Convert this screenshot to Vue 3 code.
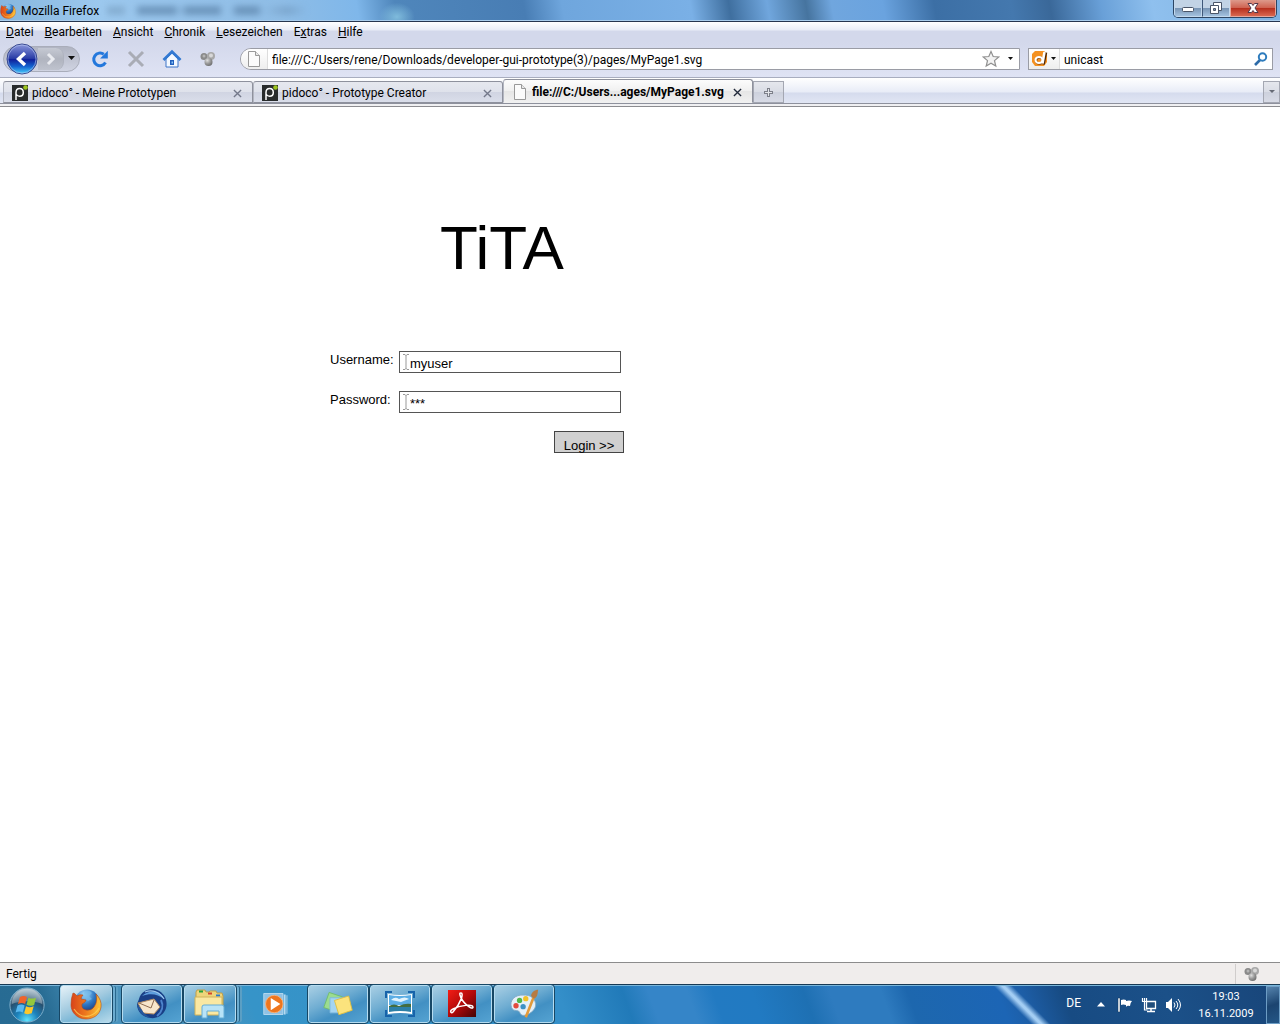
<script setup>
import { ref } from 'vue'

const menus = [
  { key: 'D', before: '', after: 'atei' },
  { key: 'B', before: '', after: 'earbeiten' },
  { key: 'A', before: '', after: 'nsicht' },
  { key: 'C', before: '', after: 'hronik' },
  { key: 'L', before: '', after: 'esezeichen' },
  { key: 'x', before: 'E', after: 'tras' },
  { key: 'H', before: '', after: 'ilfe' },
]

const tabs = [
  { title: 'pidoco° - Meine Prototypen', icon: 'pidoco', active: false },
  { title: 'pidoco° - Prototype Creator', icon: 'pidoco', active: false },
  { title: 'file:///C:/Users...ages/MyPage1.svg', icon: 'page', active: true },
]

const address = ref('file:///C:/Users/rene/Downloads/developer-gui-prototype(3)/pages/MyPage1.svg')
const search = ref('unicast')
const username = ref('myuser')
const password = ref('***')
</script>

<template>
  <div class="desktop">
    <header class="titlebar">
      <svg class="app-icon" viewBox="0 0 32 32" aria-hidden="true">
        <use href="#firefox" />
      </svg>
      <span class="window-title">Mozilla Firefox</span>
      <span class="ghost" aria-hidden="true"></span>
      <div class="window-buttons">
        <button type="button" class="minimize" aria-label="Minimieren">
          <svg viewBox="0 0 16 16"><rect x="2.500" y="7.500" width="11" height="4" rx="1" fill="#fff" stroke="#4a5568" /></svg>
        </button>
        <button type="button" class="restore" aria-label="Wiederherstellen">
          <svg viewBox="0 0 16 16">
            <path d="M5.500 2.500h8v8h-8z" fill="#fff" stroke="#4a5568" />
            <path d="M2.500 5.500h8v8h-8z" fill="#fff" stroke="#4a5568" />
            <path d="M5.500 8.500h2v2h-2z" fill="#7d97b5" stroke="#4a5568" />
          </svg>
        </button>
        <button type="button" class="close" aria-label="Schließen">
          <svg viewBox="0 0 16 16">
            <path d="M3 3.500h3.500L8 5.500l1.500-2H13L10 8l3 4.500H9.500L8 10.500l-1.500 2H3L6 8z" fill="#fff" stroke="#53394a" />
          </svg>
        </button>
      </div>
    </header>

    <nav class="menubar">
      <a v-for="m in menus" :key="m.key" href="#">{{ m.before }}<u>{{ m.key }}</u>{{ m.after }}</a>
    </nav>

    <div class="toolbar">
      <div class="history">
        <button type="button" class="back" aria-label="Zurück">
          <svg viewBox="0 0 32 32">
            <defs>
              <linearGradient id="backFill" x1="0" y1="0" x2="0" y2="1">
                <stop offset="0" stop-color="#8b97dc" />
                <stop offset=".48" stop-color="#2a3da6" />
                <stop offset=".52" stop-color="#10209a" />
                <stop offset=".75" stop-color="#1464d0" />
                <stop offset="1" stop-color="#4ad4ff" />
              </linearGradient>
            </defs>
            <circle cx="16" cy="16" r="15" fill="url(#backFill)" stroke="#39498f" />
            <circle cx="16" cy="16" r="14" fill="none" stroke="#b5c8f2" stroke-opacity=".6" />
            <path d="M19 10l-6.500 6 6.500 6" fill="none" stroke="#fff" stroke-width="3.400" />
          </svg>
        </button>
        <button type="button" class="forward" aria-label="Vor">
          <svg viewBox="0 0 24 22"><path d="M9 6l5 5-5 5" fill="none" stroke="#e9ebf0" stroke-width="3" /></svg>
        </button>
        <button type="button" class="history-menu" aria-label="Verlauf">
          <svg viewBox="0 0 8 5"><path d="M0 0h7L3.500 4z" fill="#111" /></svg>
        </button>
      </div>
      <div class="tools">
        <button type="button" aria-label="Neu laden">
          <svg viewBox="0 0 20 20">
            <path d="M15.500 13.500A6.300 6.300 0 1 1 13.800 5.300" fill="none" stroke="#2478dc" stroke-width="3" />
            <path d="M17.800 1.800v7.700h-7.700z" fill="#2478dc" />
          </svg>
        </button>
        <button type="button" aria-label="Stopp">
          <svg viewBox="0 0 20 20"><path d="M3 3l14 14M17 3L3 17" stroke="#a9acb5" stroke-width="3" /></svg>
        </button>
        <button type="button" aria-label="Startseite">
          <svg viewBox="0 0 20 20">
            <path d="M4 10v8h12v-8l-6-6z" fill="#f4f9ff" stroke="#3d75c8" />
            <path d="M1.500 11L10 2.800 18.500 11" fill="none" stroke="#3279d2" stroke-width="2.800" />
            <path d="M8 16v-5h4v5z" fill="#2461bd" />
            <path d="M9.500 12.500h1.500v2H9.500z" fill="#8cc7f7" />
          </svg>
        </button>
        <button type="button" aria-label="Erweiterung">
          <svg viewBox="0 0 20 20"><use href="#balls" /></svg>
        </button>
      </div>
      <div class="address">
        <span class="identity">
          <svg viewBox="0 0 14 16"><use href="#page" /></svg>
        </span>
        <input v-model="address" type="text" aria-label="Adresse" />
        <button type="button" class="star" aria-label="Lesezeichen hinzufügen">
          <svg viewBox="0 0 18 18"><path d="M9 1.500l2.200 5 5.500.5-4.200 3.600 1.300 5.400L9 13.200 4.200 16l1.300-5.400L1.300 7l5.500-.5z" fill="#f3f3f3" stroke="#909090" stroke-width="1.200" /></svg>
        </button>
        <button type="button" class="drop" aria-label="Adressliste">
          <svg viewBox="0 0 6 4"><path d="M0 0h5L2.500 3z" fill="#111" /></svg>
        </button>
      </div>
      <div class="search">
        <button type="button" class="engine" aria-label="Suchmaschine">
          <svg class="engine-logo" viewBox="0 0 17 17">
            <path d="M4 1h9l3 3v8l-3 4H4l-3-4V4z" fill="#f49121" />
            <g fill="none" stroke-width="2.500">
              <path d="M15 2.500L12.500 14.500" stroke="#4d2808" />
              <ellipse cx="8.500" cy="10.500" rx="3.500" ry="3" stroke="#8a4a10" />
              <path d="M13.500 2L11.500 13.500" stroke="#fff" />
              <ellipse cx="8" cy="10" rx="3.500" ry="3" stroke="#fff" stroke-width="2" />
            </g>
          </svg>
          <svg class="arrow" viewBox="0 0 6 4"><path d="M0 0h5L2.500 3z" fill="#111" /></svg>
        </button>
        <input v-model="search" type="text" aria-label="Suche" />
        <button type="button" class="go" aria-label="Suchen">
          <svg viewBox="0 0 14 14">
            <path d="M1 13l5-5" stroke="#2d6ba8" stroke-width="2.600" />
            <circle cx="8.500" cy="5" r="3.700" fill="#fff" stroke="#2d7bbd" stroke-width="2" />
          </svg>
        </button>
      </div>
    </div>

    <div class="tabstrip">
      <div v-for="t in tabs" :key="t.title" class="tab" :class="{ active: t.active }">
        <svg v-if="t.icon === 'pidoco'" class="favicon" viewBox="0 0 16 16">
          <path d="M0 0h16v16H0z" fill="#282b2c" />
          <path d="M4 15V7.500C4 5 5.500 3.500 7.600 3.500S11.300 5 11.300 7.500 9.700 11.300 7.600 11.300 4.500 10 4 9" fill="none" stroke="#fff" stroke-width="1.500" />
          <circle cx="13.500" cy="2.500" r="2.300" fill="#9cc41f" />
        </svg>
        <svg v-else class="favicon" viewBox="0 0 14 16"><use href="#page" /></svg>
        <span class="tab-title">{{ t.title }}</span>
        <button type="button" class="tab-close" aria-label="Tab schließen">
          <svg viewBox="0 0 10 10"><path d="M1 1l8 8M9 1L1 9" /></svg>
        </button>
      </div>
      <button type="button" class="new-tab" aria-label="Neuer Tab">
        <svg viewBox="0 0 9 9"><path d="M4.500 0v9M0 4.500h9" stroke="#7d808a" stroke-width="3" /><path d="M4.500 1v7M1 4.500h7" stroke="#e3e5ea" /></svg>
      </button>
      <button type="button" class="all-tabs" aria-label="Alle Tabs">
        <svg viewBox="0 0 6 4"><path d="M0 0h6L3 3z" fill="#666a75" /></svg>
      </button>
    </div>

    <main class="page">
      <form class="login" @submit.prevent>
        <h1>TiTA</h1>
        <div class="row">
          <label for="username">Username:</label>
          <div class="field">
            <svg viewBox="0 0 6 16"><path d="M0 .5h2l1 1 1-1h2M3 1v14M0 15.500h2l1-1 1 1h2" fill="none" stroke="#999" /></svg>
            <input id="username" v-model="username" type="text" />
          </div>
        </div>
        <div class="row">
          <label for="password">Password:</label>
          <div class="field">
            <svg viewBox="0 0 6 16"><path d="M0 .5h2l1 1 1-1h2M3 1v14M0 15.500h2l1-1 1 1h2" fill="none" stroke="#999" /></svg>
            <input id="password" v-model="password" type="text" />
          </div>
        </div>
        <button type="submit" class="submit">Login &gt;&gt;</button>
      </form>
    </main>

    <div class="statusbar">
      <span class="status-text">Fertig</span>
      <span class="status-addon"><svg viewBox="0 0 20 20"><use href="#balls" /></svg></span>
    </div>

    <footer class="taskbar">
      <button type="button" class="start" aria-label="Start">
        <svg viewBox="0 0 40 40">
          <defs>
            <radialGradient id="orb" cx=".5" cy=".95" r=".9">
              <stop offset="0" stop-color="#5de4ff" />
              <stop offset=".35" stop-color="#1c83bd" />
              <stop offset=".7" stop-color="#27506f" />
              <stop offset="1" stop-color="#9db4c2" />
            </radialGradient>
          </defs>
          <circle cx="20" cy="20" r="18" fill="url(#orb)" stroke="#7fb0cc" />
          <path d="M4 19a16 16 0 0 1 32 0c-9-4-22-4-32 0z" fill="#fff" fill-opacity=".3" />
          <path d="M12.500 11.500c3-1.500 5-1.300 7.500 0l-2 7.500c-2.500-1.300-4.700-1.300-7.500 0z" fill="#f0642b" />
          <path d="M21.500 12.300c2.500 1.300 5 1.300 8 0l-2 7.700c-3 1.300-5.500 1.200-8-.2z" fill="#94c83d" />
          <path d="M10 20.500c3-1.400 5-1.200 7.500 0l-2 7.300c-2.500-1.300-4.500-1.200-7.500 0z" fill="#58b8f0" />
          <path d="M19 21.300c2.500 1.300 5 1.300 8 .1l-2 7.400c-3 1.200-5.500 1.100-8-.2z" fill="#fbc72c" />
        </svg>
      </button>
      <button type="button" class="task current stacked" aria-label="Firefox">
        <svg viewBox="0 0 32 32"><use href="#firefox" /></svg>
      </button>
      <button type="button" class="task bird" aria-label="Thunderbird">
        <svg viewBox="0 0 32 32">
          <path d="M3 11C5 3 14-1 21 2c8 3 11 11 9 18-2 7-9 11-16 10C7 29 1 24 1 16z" fill="#193f86" />
          <path d="M6 8c7-7 19-6 22 3-6-5-14-6-22-3z" fill="#5d9ddd" />
          <path d="M9 4c7-3 15 0 19 7" fill="none" stroke="#9cc8ee" stroke-width="1.200" />
          <path d="M25 12c3 6 1 12-4 16" fill="none" stroke="#4d84cc" stroke-width="2" />
          <path d="M2 15l16-4 6 8-6 7-11-1z" fill="#f7e6cb" stroke="#b18b62" />
          <path d="M3 15l12 5 3-8" fill="none" stroke="#8d6b50" />
          <path d="M1 16c1 8 6 13 14 14-5-3-8-5-9-8z" fill="#24579c" />
        </svg>
      </button>
      <button type="button" class="task folder stacked" aria-label="Explorer">
        <svg viewBox="0 0 32 32">
          <path d="M2 4l1-2h8l1 2h3l1-1h6l1 2h5l1 3v18H2z" fill="#eed57b" stroke="#bf9f49" />
          <path d="M5 3.500h4" stroke="#26a33a" stroke-width="2" />
          <path d="M14 5.500h4" stroke="#d4452d" stroke-width="2" />
          <path d="M22 7.500h4" stroke="#277bd0" stroke-width="2" />
          <path d="M1 9h27v18H1z" fill="#fae8a2" stroke="#d0b25b" />
          <path d="M8 30V19q0-2 2-2h18q2 0 2 2v11h-5v-7H13v7z" fill="#b8e3f7" stroke="#64add6" />
        </svg>
      </button>
      <button type="button" class="task media flat" aria-label="Media Player">
        <svg viewBox="0 0 32 32">
          <path d="M28 6h1v21h-1zM25 5h2v23h-2z" fill="#b7daf0" />
          <path d="M2 4h22v24H2z" fill="#8fc2e5" stroke="#bbdcf0" />
          <circle cx="14" cy="16" r="10" fill="#ee761e" stroke="#f8b37c" />
          <path d="M10 9v14l11-7z" fill="#fff" />
        </svg>
      </button>
      <button type="button" class="task wide" aria-label="Kurznotizen">
        <svg viewBox="0 0 36 32">
          <path d="M8 3l15 5-6 17-15-5z" fill="#9bdc90" stroke="#71bc68" />
          <path d="M9 9h17v17H9z" fill="#a4d5f2" stroke="#7db8dd" />
          <path d="M14 12l16-5 4 16-15 5z" fill="#fbe37d" stroke="#dfbd3e" />
        </svg>
      </button>
      <button type="button" class="task wide" aria-label="Bildansicht">
        <svg viewBox="0 0 32 32">
          <path d="M2 10V4h6M24 4h6v6M30 22v6h-6M8 28H2v-6" fill="none" stroke="#1763aa" stroke-width="2" />
          <path d="M4 6q12 2 24 0v20q-12-2-24 0z" fill="#fff" />
          <path d="M5 7q11 2 22 0v10H5z" fill="#5caee5" />
          <path d="M7 12q4-4 8-1 6-3 10 0l-8 3z" fill="#e3f4fd" />
          <path d="M5 18q5-3 10 0 6-3 12-2v4H5z" fill="#426d40" />
          <path d="M5 19h22v5q-11-2-22 0z" fill="#2c7fa6" />
        </svg>
      </button>
      <button type="button" class="task wide" aria-label="Adobe Reader">
        <svg viewBox="0 0 32 32">
          <defs>
            <linearGradient id="reader" x1="0" y1="0" x2="1" y2="1">
              <stop offset="0" stop-color="#f31d16" /><stop offset=".5" stop-color="#b30a09" /><stop offset="1" stop-color="#420506" />
            </linearGradient>
          </defs>
          <path d="M2 2h28v27H2z" fill="url(#reader)" />
          <path d="M15 5c3 0 0 10-8 19-2 2-4-1 0-3 7-4 20-5 20-2 0 4-11-4-13-12-.5-2 0-2 1-2z" fill="none" stroke="#fff" stroke-width="1.500" />
        </svg>
      </button>
      <button type="button" class="task wide" aria-label="Paint">
        <svg viewBox="0 0 36 32">
          <path d="M18 6C8 5 1 12 4 20c2 5 7 2 9 5 1 3 3 5 8 3 9-3 13-11 8-17-3-4-6-5-11-5z" fill="#e4f0f8" stroke="#83a9c4" />
          <circle cx="9" cy="18" r="3" fill="#e34b3d" />
          <circle cx="13" cy="12" r="3" fill="#51b64b" />
          <circle cx="20" cy="10" r="3" fill="#f3c128" />
          <circle cx="17" cy="19" r="3" fill="#3d91c5" />
          <path d="M29 8L20 31" stroke="#e39a3a" stroke-width="3" />
          <path d="M26 7c0-4 4-7 8-7-1 4 0 8-5 10z" fill="#b67b43" />
        </svg>
      </button>
      <div class="tray">
        <span class="lang">DE</span>
        <svg class="chevron" viewBox="0 0 8 5"><path d="M0 4.500L4 0l4 4.500z" fill="#fff" /></svg>
        <svg class="tray-icon flag" viewBox="0 0 16 16">
          <path d="M1 1h2v14H1z" fill="#fff" stroke="#12345a" stroke-width=".5" />
          <path d="M4 3q3-1 5 0v1q3-1 6 0-2 2-2 5-3-1-4 1V8q-3-1-5 0z" fill="#fff" />
        </svg>
        <svg class="tray-icon" viewBox="0 0 16 16">
          <path d="M5.500 4.500h9v7h-9z" fill="#204e7c" stroke="#fff" stroke-width="1.300" />
          <path d="M10 12v2M6 14.500h8" stroke="#fff" stroke-width="1.500" />
          <path d="M1.500 1v3.500h4V1M3.500 1v3M3.500 4v9h3" fill="none" stroke="#fff" stroke-width="1.200" />
        </svg>
        <svg class="tray-icon" viewBox="0 0 16 16">
          <path d="M1 5h2l4-4v14l-4-4H1z" fill="#fff" />
          <path d="M9 5.500q2 2.500 0 5M11 4q3.500 4 0 8M13 2q5 6 0 12" fill="none" stroke="#fff" />
        </svg>
        <time class="clock"><span>19:03</span><span>16.11.2009</span></time>
        <button type="button" class="show-desktop" aria-label="Desktop anzeigen"></button>
      </div>
    </footer>

    <svg class="symbols" aria-hidden="true">
      <defs>
        <radialGradient id="globe" cx=".4" cy=".2" r=".8">
          <stop offset="0" stop-color="#a5dcfa" /><stop offset=".5" stop-color="#2f78c4" /><stop offset="1" stop-color="#132b6b" />
        </radialGradient>
        <linearGradient id="fox" x1="0" y1="0" x2="1" y2="0">
          <stop offset="0" stop-color="#d8431a" /><stop offset=".5" stop-color="#ee7a1c" /><stop offset="1" stop-color="#fbc63a" />
        </linearGradient>
        <radialGradient id="ball" cx=".35" cy=".3" r=".8">
          <stop offset="0" stop-color="#dedede" /><stop offset=".5" stop-color="#999" /><stop offset="1" stop-color="#666" />
        </radialGradient>
        <symbol id="firefox" viewBox="0 0 32 32">
          <circle cx="17" cy="14" r="12.500" fill="url(#globe)" />
          <path d="M15 3q5-1 7 2l-3 3 3 3-4 2-3-3-3-1z" fill="#78bce8" fill-opacity=".7" />
          <path d="M3 5q2 0 4 3 3-2 6-1-2 2-2 4l5 1q0 2-4 4-1 5 4 6 5 1 8-3 4-5 2-13 6 6 5 13c-1 8-8 12-15 12C7 31 1 24 1 17q0-7 2-12z" fill="url(#fox)" stroke="#b84817" stroke-width=".6" />
          <path d="M4 21q6 9 15 7 7-2 10-8" fill="none" stroke="#ffd45a" stroke-width="1.300" stroke-opacity=".7" />
        </symbol>
        <symbol id="balls" viewBox="0 0 20 20">
          <circle cx="6" cy="7.500" r="3.500" fill="#8a8a8a" />
          <circle cx="6" cy="7" r="1.500" fill="#b5b5b5" />
          <circle cx="13" cy="7" r="4" fill="#a8a8a8" />
          <circle cx="13" cy="6.500" r="2" fill="#d8d8d8" />
          <circle cx="10.500" cy="13" r="4" fill="url(#ball)" />
        </symbol>
        <symbol id="page" viewBox="0 0 14 16">
          <path d="M1.500 .5h7l4 4v11h-11z" fill="#fbfbfb" stroke="#999" />
          <path d="M8.500 .5v4h4" fill="#e8e8e8" stroke="#999" />
        </symbol>
      </defs>
    </svg>
  </div>
</template>

<style>
body {
  margin: 0;
}
</style>

<style scoped>
.desktop {
  display: flex;
  flex-direction: column;
  min-height: 100vh;
  background: #fff;
  color: #000;
  font: 12px/16px Roboto, "Open Sans", sans-serif;
}
.desktop *,
.desktop {
  box-sizing: border-box;
}
button {
  display: flex;
  align-items: center;
  justify-content: center;
  margin: 0;
  padding: 0;
  border: 0;
  background: none;
  color: inherit;
  font: inherit;
}
input {
  min-width: 0;
  margin: 0;
  padding: 0;
  border: 0;
  outline: 0;
  background: none;
  color: inherit;
  font: inherit;
}
svg {
  display: block;
  flex: none;
}
.symbols {
  position: absolute;
  width: 0;
  height: 0;
}

.titlebar {
  display: flex;
  align-items: center;
  height: 22px;
  border-bottom: 1px solid #26364f;
  box-shadow: inset 0 -1px #a9cdec;
  background:
    radial-gradient(ellipse 18px 14px at 31% 80%, #7fbbdc, transparent),
    linear-gradient(80deg, #86b6de 0, #9cc8ee 8%, #8fbde6 22%, #7fb7ea 28%, #4f86bb 31%, #487db4 41%, #6fa6dd 44%, #7ab0e6 54%, #3f6f9f 57%, #70a6dd 60%, #46749f 63%, #70a6de 65%, #6aa3df 69%, #3c6fa5 73%, #4478ae 79%, #3a6899 82%, #69a0d8 86%, #8fc0ee 90%, #7db0e0 100%);
}
.app-icon {
  width: 16px;
  height: 16px;
}
.window-title {
  margin-left: 5px;
}
.ghost {
  width: 200px;
  height: 9px;
  margin-left: 8px;
  filter: blur(3px);
  opacity: .5;
  background: linear-gradient(90deg, #7096b8 8%, transparent 10%, transparent 14%, #466b91 16%, #466b91 34%, transparent 36%, #466b91 40%, #466b91 56%, transparent 58%, transparent 62%, #466b91 65%, #466b91 75%, transparent 78%, #6a92b8 90%, transparent);
}
.window-buttons {
  display: flex;
  align-self: flex-start;
  height: 18px;
  margin: 0 3px 0 auto;
  border: 1px solid #2d4664;
  border-top: 0;
  border-radius: 0 0 5px 5px;
  overflow: hidden;
}
.window-buttons button {
  width: 28px;
  height: 17px;
  border: 1px solid #c3d8ec;
  border-top: 0;
  background: linear-gradient(#c2d3e5 0 48%, #7793b3 50%, #a3c1df);
}
.window-buttons button + button {
  border-left-color: #3f5879;
}
.window-buttons svg {
  width: 16px;
  height: 16px;
}
.window-buttons .close {
  width: 46px;
  border-color: #e5a79c;
  background: linear-gradient(#dd9a8b 0, #cf6351 48%, #b52d1b 50%, #d8674f);
}

.menubar {
  display: flex;
  gap: 11px;
  height: 20px;
  padding: 2px 6px;
  background: linear-gradient(#fff 0, #e9edf7 8px, #d3d8eb 9px, #d3d8eb 100%);
}
.menubar a {
  color: inherit;
  text-decoration: none;
}

.toolbar {
  display: flex;
  align-items: center;
  height: 36px;
  padding: 0 7px 2px 3px;
  border-bottom: 1px solid #a8adbf;
  background: linear-gradient(#d3d8eb, #dfe3f4);
}
.history {
  display: flex;
  align-items: center;
  width: 77px;
  height: 26px;
  border: 1px solid #a9adba;
  border-radius: 13px;
  background: linear-gradient(#b0b4c2, #d0d4e2);
}
.back,
.back svg {
  width: 32px;
  height: 32px;
}
.back {
  margin-left: 2px;
}
.forward {
  width: 26px;
  height: 22px;
  border-right: 1px solid #aeb2be;
  border-radius: 0 8px 8px 0;
  background: linear-gradient(#c5c9d3, #b0b4bf 50%, #bfc3ce);
}
.forward svg {
  width: 24px;
  height: 22px;
}
.history-menu {
  width: 15px;
  height: 22px;
}
.history-menu svg {
  width: 8px;
  height: 5px;
}
.tools {
  display: flex;
  gap: 16px;
  margin-left: 10px;
}
.tools button,
.tools svg {
  width: 20px;
  height: 20px;
}
.address {
  display: flex;
  flex: 1;
  align-items: center;
  height: 22px;
  margin-left: 22px;
  border: 1px solid #9a9ca5;
  border-radius: 11px 0 0 11px;
  background: #fff;
  overflow: hidden;
}
.identity {
  display: flex;
  align-items: center;
  justify-content: flex-end;
  width: 27px;
  height: 20px;
  padding-right: 6px;
  border-right: 1px solid #ddd;
  background: linear-gradient(#fff, #eee);
}
.identity svg {
  width: 14px;
  height: 16px;
}
.address input {
  flex: 1;
  height: 20px;
  padding: 2px 0 0 4px;
}
.star svg {
  width: 18px;
  height: 18px;
}
.drop {
  width: 17px;
  margin-left: 2px;
}
.drop svg,
.arrow {
  width: 6px;
  height: 4px;
}
.search {
  display: flex;
  flex: none;
  align-items: center;
  width: 245px;
  height: 22px;
  margin-left: 8px;
  border: 1px solid #9a9ca5;
  background: #fff;
}
.engine {
  gap: 3px;
  width: 31px;
  height: 20px;
  border-right: 1px solid #ddd;
  background: linear-gradient(#fff, #eee);
}
.engine-logo {
  width: 17px;
  height: 17px;
}
.search input {
  flex: 1;
  height: 20px;
  padding: 2px 0 0 4px;
}
.go {
  width: 22px;
}
.go svg {
  width: 14px;
  height: 14px;
}

.tabstrip {
  display: flex;
  align-items: flex-end;
  height: 29px;
  padding: 0 0 3px 3px;
  border-bottom: 1px solid #8c8c90;
  background:
    linear-gradient(#8e919d, #8e919d) 0 25px / 100% 1px no-repeat,
    linear-gradient(#f0f0f2, #f0f0f2) 0 26px / 100% 3px no-repeat,
    linear-gradient(#fff 0, #e8ecf7 14px, #d5dbed 15px, #e1e6f4 25px);
}
.tab {
  display: flex;
  flex: 0 1 250px;
  align-items: center;
  min-width: 0;
  height: 22px;
  padding: 2px 10px 0 8px;
  border: 1px solid #8e919d;
  border-left-color: #b3b6c1;
  border-radius: 3px 3px 0 0;
  background: linear-gradient(#e6e8ef, #dfe2eb 48%, #d0d4e2 50%, #dadeea);
}
.tab.active {
  height: 24px;
  border-bottom-color: #f0f0f0;
  background: linear-gradient(#fcfcfc, #f0f0f0 50%, #e6e6e6 52%, #f0f0f0);
  font-weight: 700;
}
.favicon {
  width: 16px;
  height: 16px;
}
.tab-title {
  flex: 1;
  margin-left: 4px;
  overflow: hidden;
  white-space: nowrap;
}
.tab-close svg {
  width: 9px;
  height: 9px;
  fill: none;
  stroke: #73788a;
  stroke-width: 1.5px;
}
.tab.active .tab-close svg {
  stroke: #222a3b;
}
.new-tab,
.all-tabs {
  height: 22px;
  border: 1px solid #a4a7b2;
  background: linear-gradient(#e5e7ed, #d9dce5 50%, #cdd1dd 52%, #d8dbe6);
}
.new-tab {
  width: 31px;
}
.new-tab svg {
  width: 9px;
  height: 9px;
}
.all-tabs {
  width: 17px;
  margin-left: auto;
}
.all-tabs svg {
  width: 6px;
  height: 4px;
}

.page {
  flex: 1;
  padding: 106px 16px 16px;
  font-family: "Liberation Sans", Arial, sans-serif;
}
.login {
  display: flex;
  flex-direction: column;
  gap: 18px;
  width: 294px;
  margin-left: 314px;
  font-size: 13px;
}
h1 {
  margin: 0 0 50px 110px;
  font-size: 62px;
  font-weight: 400;
  line-height: 70px;
}
.row {
  display: flex;
}
.row label {
  width: 69px;
  line-height: 18px;
}
.field {
  display: flex;
  align-items: center;
  width: 222px;
  height: 22px;
  padding-left: 3px;
  border: 1px solid #555;
}
.field svg {
  width: 6px;
  height: 16px;
}
.field input {
  flex: 1;
  height: 18px;
  padding: 2px 0 0 1px;
}
.submit {
  align-self: flex-end;
  width: 70px;
  height: 22px;
  padding-top: 7px;
  border: 1px solid #444;
  background: #d0d0d0;
}

.statusbar {
  display: flex;
  align-items: center;
  height: 22px;
  padding-left: 6px;
  border-top: 1px solid #8c8c8c;
  background: #f0edec;
}
.status-text {
  flex: 1;
}
.status-addon {
  display: flex;
  align-items: center;
  width: 45px;
  height: 20px;
  padding-left: 6px;
  border-left: 1px solid #d0cdcc;
}
.status-addon svg {
  width: 20px;
  height: 20px;
}

.taskbar {
  display: flex;
  height: 40px;
  border-top: 1px solid #173954;
  box-shadow: inset 0 1px #79b5d9;
  background:
    linear-gradient(45deg, transparent 42%, #a3cdf3 49%, #a3cdf3 51%, transparent 58%) right 218px top 0 / 80px 40px no-repeat,
    linear-gradient(70deg, #276b93 0, #286c93 4%, #4a93bd 8%, #4a93bd 17%, #3694c8 20%, #348fc9 44%, #217ab9 49%, #3585c8 51%, #3585c8 54%, #227ac2 56%, #217ac2 59%, #1e70b3 63%, #2e7bbf 65%, #2e7bbf 69%, #1d67ae 71%, #1c65b5 78%, #1d5da5 80%, #174b83 83%, #1b5088 91%, #184579 100%);
  color: #fff;
}
.start {
  width: 54px;
  margin-right: 6px;
}
.start svg {
  width: 38px;
  height: 38px;
}
.task {
  width: 60px;
  height: 38px;
  margin-right: 2px;
  border: 1px solid #b5dcf0;
  border-radius: 3px;
  outline: 1px solid #174765;
  outline-offset: 0;
  background: linear-gradient(155deg, #a9cfe4, #6fadd2 40%, #4290c3 65%, #55a3d2);
}
.task svg {
  width: 32px;
  height: 32px;
}
.current {
  width: 52px;
  background: linear-gradient(155deg, #e6f2f8, #a3cbe0 45%, #7db8d7 65%, #b9dbeb);
}
.stacked {
  margin-right: 10px;
  box-shadow: 4px 0 0 -1px #6cacd0, 5px 0 0 -1px #28688e, 7px 0 0 -1px #5b9fc4;
}
.folder {
  width: 52px;
}
.flat {
  border-color: transparent;
  outline: 0;
  background: none;
}
.flat svg {
  width: 28px;
  height: 28px;
}
.tray {
  display: flex;
  align-items: center;
  margin-left: auto;
}
.lang {
  margin: 0 16px 4px 0;
}
.chevron {
  width: 8px;
  height: 5px;
  margin-right: 12px;
}
.tray-icon {
  width: 16px;
  height: 16px;
  margin-right: 8px;
}
.clock {
  display: flex;
  flex-direction: column;
  align-items: center;
  width: 60px;
  margin: 0 10px 0 7px;
  font-size: 11px;
  line-height: 17px;
}
.show-desktop {
  width: 14px;
  height: 38px;
  border: 1px solid #6d9dc5;
  background: linear-gradient(160deg, #5583ad, #1b4470 50%, #245686);
}
</style>
